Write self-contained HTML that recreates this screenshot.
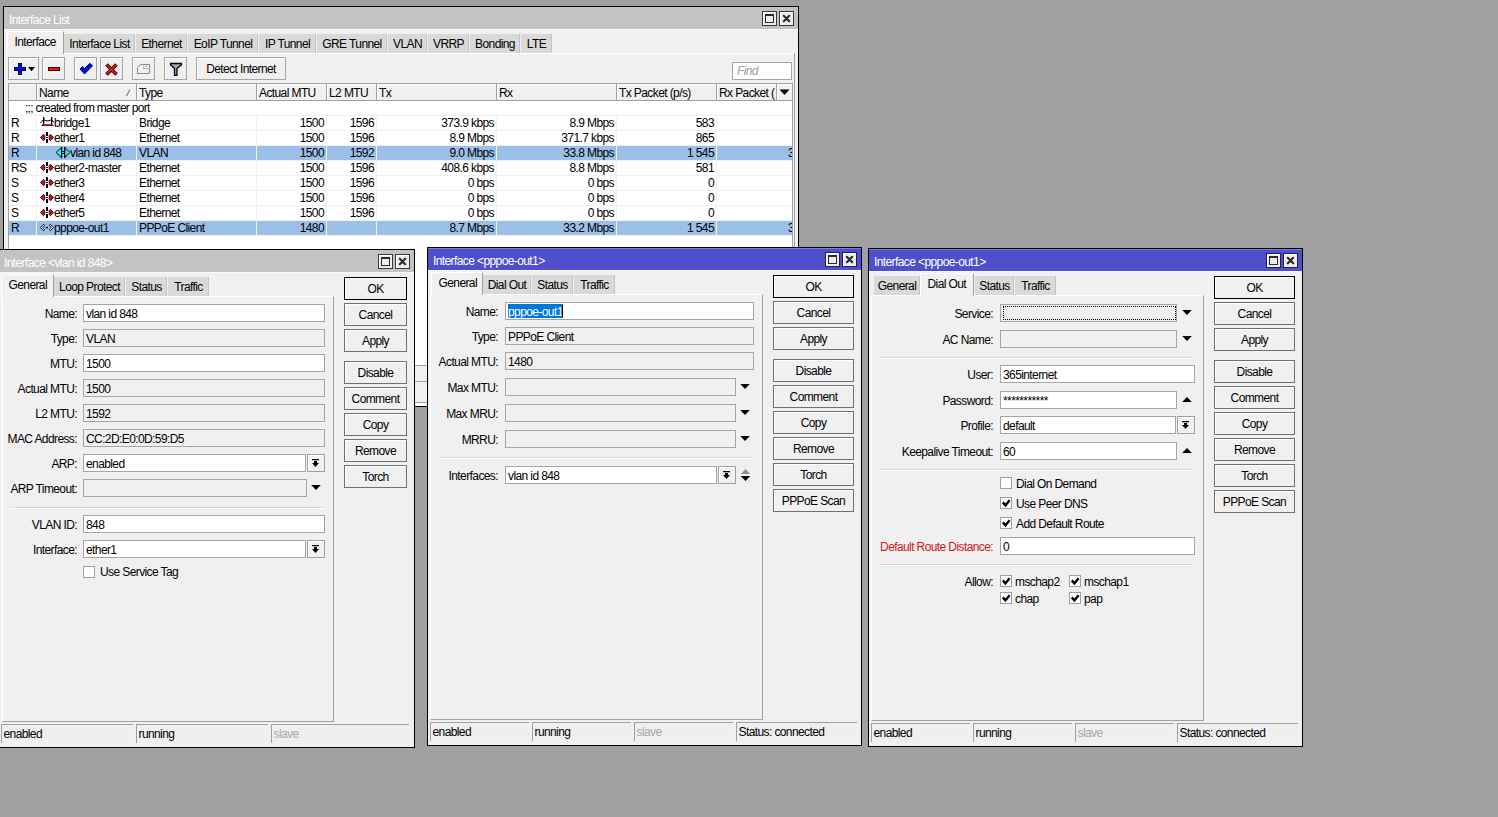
<!DOCTYPE html><html><head><meta charset="utf-8"><style>
html,body{margin:0;padding:0}
body{width:1498px;height:817px;overflow:hidden;background:#a0a0a0;position:relative}
div{position:absolute;box-sizing:border-box}
.t{font-family:"Liberation Sans",sans-serif;font-size:12px;line-height:13px;white-space:pre;letter-spacing:-0.6px;color:#000}
svg{overflow:visible}
</style></head><body>
<div style="left:3px;top:6px;width:796px;height:401px;background:#000"></div>
<div style="left:4px;top:7px;width:794px;height:399px;background:#f0f0f0"></div>
<div style="left:4px;top:7px;width:794px;height:22px;background:#c3c3c3"></div>
<div style="left:4px;top:29px;width:794px;height:1px;background:#fafafa"></div>
<div class="t" style="left:9px;top:14px;color:#fff">Interface List</div>
<div style="left:762px;top:11px;width:15px;height:15px;background:#383838"></div>
<div style="left:763px;top:12px;width:13px;height:13px;background:#fff"></div>
<div style="left:764px;top:13px;width:12px;height:12px;background:#ececec"></div>
<div style="left:765px;top:14px;width:9px;height:9px;border:1px solid #2a2a2a;border-top-width:2px"></div>
<div style="left:779px;top:11px;width:15px;height:15px;background:#383838"></div>
<div style="left:780px;top:12px;width:13px;height:13px;background:#fff"></div>
<div style="left:781px;top:13px;width:12px;height:12px;background:#ececec"></div>
<svg style="position:absolute;left:779px;top:11px" width="15" height="15" viewBox="779 11 15 15"><path d="M783.8 15.8L789.2 21.2M789.2 15.8L783.8 21.2" stroke="#2a2a2a" stroke-width="2.2" stroke-linecap="round"/></svg>
<div style="left:7px;top:31px;width:57px;height:23px;background:#f0f0f0;border-left:1px solid #fff;border-top:1px solid #fff;border-right:1px solid #a0a0a0"></div>
<div class="t" style="left:14.5px;top:36px;">Interface</div>
<div style="left:64px;top:34px;width:71px;height:19px;background:#d9d9d9;border-right:1px solid #c4c4c4"></div>
<div class="t" style="left:-100.5px;top:38px;width:400px;text-align:center;">Interface List</div>
<div style="left:136px;top:34px;width:51px;height:19px;background:#d9d9d9;border-right:1px solid #c4c4c4"></div>
<div class="t" style="left:-38.5px;top:38px;width:400px;text-align:center;">Ethernet</div>
<div style="left:188px;top:34px;width:70px;height:19px;background:#d9d9d9;border-right:1px solid #c4c4c4"></div>
<div class="t" style="left:23.0px;top:38px;width:400px;text-align:center;">EoIP Tunnel</div>
<div style="left:259px;top:34px;width:57px;height:19px;background:#d9d9d9;border-right:1px solid #c4c4c4"></div>
<div class="t" style="left:87.5px;top:38px;width:400px;text-align:center;">IP Tunnel</div>
<div style="left:317px;top:34px;width:70px;height:19px;background:#d9d9d9;border-right:1px solid #c4c4c4"></div>
<div class="t" style="left:152.0px;top:38px;width:400px;text-align:center;">GRE Tunnel</div>
<div style="left:388px;top:34px;width:39px;height:19px;background:#d9d9d9;border-right:1px solid #c4c4c4"></div>
<div class="t" style="left:207.5px;top:38px;width:400px;text-align:center;">VLAN</div>
<div style="left:428px;top:34px;width:41px;height:19px;background:#d9d9d9;border-right:1px solid #c4c4c4"></div>
<div class="t" style="left:248.5px;top:38px;width:400px;text-align:center;">VRRP</div>
<div style="left:470px;top:34px;width:50px;height:19px;background:#d9d9d9;border-right:1px solid #c4c4c4"></div>
<div class="t" style="left:295.0px;top:38px;width:400px;text-align:center;">Bonding</div>
<div style="left:521px;top:34px;width:31px;height:19px;background:#d9d9d9;border-right:1px solid #c4c4c4"></div>
<div class="t" style="left:336.5px;top:38px;width:400px;text-align:center;">LTE</div>
<div style="left:64px;top:53px;width:731px;height:1px;background:#fff"></div>
<div style="left:794px;top:53px;width:1px;height:347px;background:#a0a0a0"></div>
<div style="left:8px;top:57px;width:31px;height:23px;background:#f0f0f0;border:1px solid #a5a5a5"></div>
<div style="left:9px;top:58px;width:29px;height:21px;border-top:1px solid #fff;border-left:1px solid #fff"></div>
<div style="left:42px;top:57px;width:23px;height:23px;background:#f0f0f0;border:1px solid #a5a5a5"></div>
<div style="left:43px;top:58px;width:21px;height:21px;border-top:1px solid #fff;border-left:1px solid #fff"></div>
<div style="left:74px;top:57px;width:23px;height:23px;background:#f0f0f0;border:1px solid #a5a5a5"></div>
<div style="left:75px;top:58px;width:21px;height:21px;border-top:1px solid #fff;border-left:1px solid #fff"></div>
<div style="left:100px;top:57px;width:23px;height:23px;background:#f0f0f0;border:1px solid #a5a5a5"></div>
<div style="left:101px;top:58px;width:21px;height:21px;border-top:1px solid #fff;border-left:1px solid #fff"></div>
<div style="left:132px;top:57px;width:23px;height:23px;background:#f0f0f0;border:1px solid #a5a5a5"></div>
<div style="left:133px;top:58px;width:21px;height:21px;border-top:1px solid #fff;border-left:1px solid #fff"></div>
<div style="left:164px;top:57px;width:23px;height:23px;background:#f0f0f0;border:1px solid #a5a5a5"></div>
<div style="left:165px;top:58px;width:21px;height:21px;border-top:1px solid #fff;border-left:1px solid #fff"></div>
<div style="left:196px;top:57px;width:90px;height:23px;background:#f0f0f0;border:1px solid #a5a5a5"></div>
<div style="left:197px;top:58px;width:88px;height:21px;border-top:1px solid #fff;border-left:1px solid #fff"></div>
<div class="t" style="left:41px;top:63px;width:400px;text-align:center;">Detect Internet</div>
<svg style="position:absolute;left:13px;top:62px" width="24" height="14" viewBox="13 62 24 14"><path d="M18 63H22V67H26V71H22V75H18V71H14V67H18Z" fill="#000050"/><path d="M19 64H21V68H25V70H21V74H19V70H15V68H19Z" fill="#0010f0"/><path d="M28 67H35L31.5 71.3Z" fill="#000"/></svg>
<div style="left:48px;top:67px;width:12px;height:4px;background:#400000"></div>
<div style="left:49px;top:68px;width:10px;height:2px;background:#e81818"></div>
<svg style="position:absolute;left:78px;top:62px" width="16" height="14" viewBox="78 62 16 14"><path d="M80 69L82.5 66.5L84.5 68.5L90 63.3L92.5 65.8L84.5 74Z" fill="#0008e0" stroke="#000050" stroke-width="0.9" stroke-linejoin="round"/></svg>
<svg style="position:absolute;left:104px;top:62px" width="14" height="14" viewBox="104 62 14 14"><path d="M106.5 64.5L116.5 74.5M116.5 64.5L106.5 74.5" stroke="#300000" stroke-width="3.6"/><path d="M106.9 64.9L116.1 74.1M116.1 64.9L106.9 74.1" stroke="#e81818" stroke-width="1.8"/></svg>
<svg style="position:absolute;left:135px;top:62px" width="16" height="14" viewBox="135 62 16 14"><path d="M137.5 67.5L140.5 64.5H149.5V73.5H137.5Z" fill="none" stroke="#8a8a8a" stroke-width="1"/><path d="M143 66.5H144M145.5 66.5H147M143 68.5H145M146 68.5H148" stroke="#9a9a9a" stroke-width="1"/></svg>
<svg style="position:absolute;left:168px;top:62px" width="16" height="15" viewBox="168 62 16 15"><path d="M170.5 63.5H181.5V64.8L177 68.5V75.3H174.5V68.5L170.5 64.8Z" fill="#9aa6c6" stroke="#000" stroke-width="1.3" stroke-linejoin="round"/></svg>
<div style="left:732px;top:62px;width:60px;height:18px;background:#fff;border:1px solid #a5a5a5"></div>
<div class="t" style="left:737px;top:65px;color:#a0a0a0;font-style:italic">Find</div>
<div style="left:8px;top:83px;width:785px;height:283px;background:#fff;border:1px solid #a0a0a0"></div>
<div style="left:9px;top:84px;width:783px;height:17px;background:#f0f0f0;border-bottom:1px solid #a0a0a0;border-top:1px solid #fff"></div>
<div style="left:36px;top:84px;width:1px;height:16px;background:#a0a0a0"></div>
<div style="left:37px;top:85px;width:1px;height:15px;background:#fff"></div>
<div style="left:136px;top:84px;width:1px;height:16px;background:#a0a0a0"></div>
<div style="left:137px;top:85px;width:1px;height:15px;background:#fff"></div>
<div style="left:256px;top:84px;width:1px;height:16px;background:#a0a0a0"></div>
<div style="left:257px;top:85px;width:1px;height:15px;background:#fff"></div>
<div style="left:326px;top:84px;width:1px;height:16px;background:#a0a0a0"></div>
<div style="left:327px;top:85px;width:1px;height:15px;background:#fff"></div>
<div style="left:376px;top:84px;width:1px;height:16px;background:#a0a0a0"></div>
<div style="left:377px;top:85px;width:1px;height:15px;background:#fff"></div>
<div style="left:496px;top:84px;width:1px;height:16px;background:#a0a0a0"></div>
<div style="left:497px;top:85px;width:1px;height:15px;background:#fff"></div>
<div style="left:616px;top:84px;width:1px;height:16px;background:#a0a0a0"></div>
<div style="left:617px;top:85px;width:1px;height:15px;background:#fff"></div>
<div style="left:716px;top:84px;width:1px;height:16px;background:#a0a0a0"></div>
<div style="left:717px;top:85px;width:1px;height:15px;background:#fff"></div>
<div style="left:776px;top:84px;width:1px;height:16px;background:#a0a0a0"></div>
<div style="left:777px;top:85px;width:1px;height:15px;background:#fff"></div>
<div class="t" style="left:39px;top:87px;">Name</div>
<div class="t" style="left:139px;top:87px;">Type</div>
<div class="t" style="left:259px;top:87px;">Actual MTU</div>
<div class="t" style="left:329px;top:87px;">L2 MTU</div>
<div class="t" style="left:379px;top:87px;">Tx</div>
<div class="t" style="left:499px;top:87px;">Rx</div>
<div class="t" style="left:619px;top:87px;">Tx Packet (p/s)</div>
<div class="t" style="left:719px;top:87px;width:56px;overflow:hidden">Rx Packet (p/s)</div>
<svg style="position:absolute;left:778px;top:88px" width="13" height="9" viewBox="778 88 13 9"><path d="M779.5 89.5H789.5L784.5 95Z" fill="#000"/></svg>
<svg style="position:absolute;left:125px;top:88px" width="10" height="10" viewBox="125 88 10 10"><path d="M133.5 96H126.5M130 89.5L133.5 96" stroke="#fff" stroke-width="1.1" fill="none"/><path d="M126.5 96L130 89.5" stroke="#7a7a7a" stroke-width="1.1" fill="none"/></svg>
<div class="t" style="left:25px;top:102px;letter-spacing:-0.72px">;;; created from master port</div>
<div style="left:9px;top:115px;width:783px;height:1px;background:#f0f0f0"></div>
<div class="t" style="left:11px;top:117px;">R</div>
<svg style="position:absolute;left:39px;top:115px" width="16" height="15" viewBox="39 115 16 15"><path d="M43 117H44.3V124.5H43Z M51 117H52.3V124.5H51Z" fill="#000"/><path d="M40.3 123L43.6 119.6L46 120.8H49L51.6 119.6L54 122.5" stroke="#000" stroke-width="1" fill="none"/><path d="M41 126L42.5 124.2H52.5L54 126Z" fill="#900010"/></svg>
<div class="t" style="left:54px;top:117px;">bridge1</div>
<div class="t" style="left:139px;top:117px;">Bridge</div>
<div class="t" style="left:-76px;top:117px;width:400px;text-align:right;">1500</div>
<div class="t" style="left:-26px;top:117px;width:400px;text-align:right;">1596</div>
<div class="t" style="left:94px;top:117px;width:400px;text-align:right;">373.9 kbps</div>
<div class="t" style="left:214px;top:117px;width:400px;text-align:right;">8.9 Mbps</div>
<div class="t" style="left:314px;top:117px;width:400px;text-align:right;">583</div>
<div style="left:9px;top:130px;width:783px;height:1px;background:#f0f0f0"></div>
<div class="t" style="left:11px;top:132px;">R</div>
<svg style="position:absolute;left:39px;top:130px" width="16" height="15" viewBox="39 130 16 15"><path d="M40.4 137.5L43.6 134.3L44.8 135.5V139.5L43.6 140.7Z M53.6 137.5L50.4 134.3L49.2 135.5V139.5L50.4 140.7Z" fill="#b81828" stroke="#380008" stroke-width="0.9" stroke-linejoin="round"/><path d="M46 132H48V136H46Z M46 137H48V138H46Z M46 139H48V143H46Z" fill="#000"/></svg>
<div class="t" style="left:54px;top:132px;">ether1</div>
<div class="t" style="left:139px;top:132px;">Ethernet</div>
<div class="t" style="left:-76px;top:132px;width:400px;text-align:right;">1500</div>
<div class="t" style="left:-26px;top:132px;width:400px;text-align:right;">1596</div>
<div class="t" style="left:94px;top:132px;width:400px;text-align:right;">8.9 Mbps</div>
<div class="t" style="left:214px;top:132px;width:400px;text-align:right;">371.7 kbps</div>
<div class="t" style="left:314px;top:132px;width:400px;text-align:right;">865</div>
<div style="left:9px;top:146px;width:783px;height:14px;background:#9bbfe8"></div>
<div style="left:9px;top:145px;width:783px;height:1px;background:#f0f0f0"></div>
<div class="t" style="left:11px;top:147px;">R</div>
<svg style="position:absolute;left:55px;top:145px" width="16" height="15" viewBox="55 145 16 15"><path d="M56.2 152.5L61.5 147.2V157.8Z M69.8 152.5L64.7 147.2V157.8Z" fill="#28f0f0" stroke="#000" stroke-width="1" stroke-linejoin="miter"/><path d="M61.5 151.5H64.7V153.5H61.5Z" fill="#28f0f0"/><path d="M61.5 151.5H64.7M61.5 153.5H64.7" stroke="#000" stroke-width="0.9"/><path d="M61 147H62.2V158H61Z M64 147H65.2V158H64Z" fill="#000"/></svg>
<div class="t" style="left:70px;top:147px;">vlan id 848</div>
<div class="t" style="left:139px;top:147px;">VLAN</div>
<div class="t" style="left:-76px;top:147px;width:400px;text-align:right;">1500</div>
<div class="t" style="left:-26px;top:147px;width:400px;text-align:right;">1592</div>
<div class="t" style="left:94px;top:147px;width:400px;text-align:right;">9.0 Mbps</div>
<div class="t" style="left:214px;top:147px;width:400px;text-align:right;">33.8 Mbps</div>
<div class="t" style="left:314px;top:147px;width:400px;text-align:right;">1 545</div>
<div style="left:717px;top:147px;width:75px;height:13px;overflow:hidden"><div class="t" style="left:0;top:0px;width:77px;text-align:right">3</div></div>
<div style="left:9px;top:160px;width:783px;height:1px;background:#f0f0f0"></div>
<div class="t" style="left:11px;top:162px;">RS</div>
<svg style="position:absolute;left:39px;top:160px" width="16" height="15" viewBox="39 160 16 15"><path d="M40.4 167.5L43.6 164.3L44.8 165.5V169.5L43.6 170.7Z M53.6 167.5L50.4 164.3L49.2 165.5V169.5L50.4 170.7Z" fill="#b81828" stroke="#380008" stroke-width="0.9" stroke-linejoin="round"/><path d="M46 162H48V166H46Z M46 167H48V168H46Z M46 169H48V173H46Z" fill="#000"/></svg>
<div class="t" style="left:54px;top:162px;">ether2-master</div>
<div class="t" style="left:139px;top:162px;">Ethernet</div>
<div class="t" style="left:-76px;top:162px;width:400px;text-align:right;">1500</div>
<div class="t" style="left:-26px;top:162px;width:400px;text-align:right;">1596</div>
<div class="t" style="left:94px;top:162px;width:400px;text-align:right;">408.6 kbps</div>
<div class="t" style="left:214px;top:162px;width:400px;text-align:right;">8.8 Mbps</div>
<div class="t" style="left:314px;top:162px;width:400px;text-align:right;">581</div>
<div style="left:9px;top:175px;width:783px;height:1px;background:#f0f0f0"></div>
<div class="t" style="left:11px;top:177px;">S</div>
<svg style="position:absolute;left:39px;top:175px" width="16" height="15" viewBox="39 175 16 15"><path d="M40.4 182.5L43.6 179.3L44.8 180.5V184.5L43.6 185.7Z M53.6 182.5L50.4 179.3L49.2 180.5V184.5L50.4 185.7Z" fill="#b81828" stroke="#380008" stroke-width="0.9" stroke-linejoin="round"/><path d="M46 177H48V181H46Z M46 182H48V183H46Z M46 184H48V188H46Z" fill="#000"/></svg>
<div class="t" style="left:54px;top:177px;">ether3</div>
<div class="t" style="left:139px;top:177px;">Ethernet</div>
<div class="t" style="left:-76px;top:177px;width:400px;text-align:right;">1500</div>
<div class="t" style="left:-26px;top:177px;width:400px;text-align:right;">1596</div>
<div class="t" style="left:94px;top:177px;width:400px;text-align:right;">0 bps</div>
<div class="t" style="left:214px;top:177px;width:400px;text-align:right;">0 bps</div>
<div class="t" style="left:314px;top:177px;width:400px;text-align:right;">0</div>
<div style="left:9px;top:190px;width:783px;height:1px;background:#f0f0f0"></div>
<div class="t" style="left:11px;top:192px;">S</div>
<svg style="position:absolute;left:39px;top:190px" width="16" height="15" viewBox="39 190 16 15"><path d="M40.4 197.5L43.6 194.3L44.8 195.5V199.5L43.6 200.7Z M53.6 197.5L50.4 194.3L49.2 195.5V199.5L50.4 200.7Z" fill="#b81828" stroke="#380008" stroke-width="0.9" stroke-linejoin="round"/><path d="M46 192H48V196H46Z M46 197H48V198H46Z M46 199H48V203H46Z" fill="#000"/></svg>
<div class="t" style="left:54px;top:192px;">ether4</div>
<div class="t" style="left:139px;top:192px;">Ethernet</div>
<div class="t" style="left:-76px;top:192px;width:400px;text-align:right;">1500</div>
<div class="t" style="left:-26px;top:192px;width:400px;text-align:right;">1596</div>
<div class="t" style="left:94px;top:192px;width:400px;text-align:right;">0 bps</div>
<div class="t" style="left:214px;top:192px;width:400px;text-align:right;">0 bps</div>
<div class="t" style="left:314px;top:192px;width:400px;text-align:right;">0</div>
<div style="left:9px;top:205px;width:783px;height:1px;background:#f0f0f0"></div>
<div class="t" style="left:11px;top:207px;">S</div>
<svg style="position:absolute;left:39px;top:205px" width="16" height="15" viewBox="39 205 16 15"><path d="M40.4 212.5L43.6 209.3L44.8 210.5V214.5L43.6 215.7Z M53.6 212.5L50.4 209.3L49.2 210.5V214.5L50.4 215.7Z" fill="#b81828" stroke="#380008" stroke-width="0.9" stroke-linejoin="round"/><path d="M46 207H48V211H46Z M46 212H48V213H46Z M46 214H48V218H46Z" fill="#000"/></svg>
<div class="t" style="left:54px;top:207px;">ether5</div>
<div class="t" style="left:139px;top:207px;">Ethernet</div>
<div class="t" style="left:-76px;top:207px;width:400px;text-align:right;">1500</div>
<div class="t" style="left:-26px;top:207px;width:400px;text-align:right;">1596</div>
<div class="t" style="left:94px;top:207px;width:400px;text-align:right;">0 bps</div>
<div class="t" style="left:214px;top:207px;width:400px;text-align:right;">0 bps</div>
<div class="t" style="left:314px;top:207px;width:400px;text-align:right;">0</div>
<div style="left:9px;top:221px;width:783px;height:14px;background:#9bbfe8"></div>
<div style="left:9px;top:220px;width:783px;height:1px;background:#f0f0f0"></div>
<div class="t" style="left:11px;top:222px;">R</div>
<svg style="position:absolute;left:39px;top:220px" width="16" height="15" viewBox="39 220 16 15"><path d="M40.3 227.5L43.6 224.2L44.6 225.6L42.7 227.5L44.6 229.4L43.6 230.8Z M53.7 227.5L50.4 224.2L49.4 225.6L51.3 227.5L49.4 229.4L50.4 230.8Z" fill="#e8e0f4" stroke="#000" stroke-width="0.9" stroke-linejoin="round"/><path d="M45.8 226.9H48V228.2H45.8Z" fill="#000"/></svg>
<div class="t" style="left:54px;top:222px;">pppoe-out1</div>
<div class="t" style="left:139px;top:222px;">PPPoE Client</div>
<div class="t" style="left:-76px;top:222px;width:400px;text-align:right;">1480</div>
<div class="t" style="left:-26px;top:222px;width:400px;text-align:right;"></div>
<div class="t" style="left:94px;top:222px;width:400px;text-align:right;">8.7 Mbps</div>
<div class="t" style="left:214px;top:222px;width:400px;text-align:right;">33.2 Mbps</div>
<div class="t" style="left:314px;top:222px;width:400px;text-align:right;">1 545</div>
<div style="left:717px;top:222px;width:75px;height:13px;overflow:hidden"><div class="t" style="left:0;top:0px;width:77px;text-align:right">3</div></div>
<div style="left:36px;top:115px;width:1px;height:120px;background:#f0f0f0"></div>
<div style="left:136px;top:115px;width:1px;height:120px;background:#f0f0f0"></div>
<div style="left:256px;top:115px;width:1px;height:120px;background:#f0f0f0"></div>
<div style="left:326px;top:115px;width:1px;height:120px;background:#f0f0f0"></div>
<div style="left:376px;top:115px;width:1px;height:120px;background:#f0f0f0"></div>
<div style="left:496px;top:115px;width:1px;height:120px;background:#f0f0f0"></div>
<div style="left:616px;top:115px;width:1px;height:120px;background:#f0f0f0"></div>
<div style="left:716px;top:115px;width:1px;height:120px;background:#f0f0f0"></div>
<div style="left:9px;top:235px;width:783px;height:1px;background:#f0f0f0"></div>
<div style="left:4px;top:366px;width:794px;height:16px;background:#f0f0f0;border-bottom:1px solid #a0a0a0"></div>
<div style="left:4px;top:382px;width:794px;height:21px;background:#f0f0f0;border-bottom:1px solid #a0a0a0"></div>
<div style="left:4px;top:403px;width:794px;height:3px;background:#fff"></div>
<div style="left:-2px;top:249px;width:417px;height:499px;background:#000"></div>
<div style="left:-1px;top:250px;width:415px;height:497px;background:#f0f0f0"></div>
<div style="left:-1px;top:250px;width:415px;height:22px;background:#c3c3c3"></div>
<div style="left:-1px;top:272px;width:415px;height:1px;background:#fafafa"></div>
<div class="t" style="left:4px;top:257px;color:#fff">Interface &lt;vlan id 848&gt;</div>
<div style="left:378px;top:254px;width:15px;height:15px;background:#383838"></div>
<div style="left:379px;top:255px;width:13px;height:13px;background:#fff"></div>
<div style="left:380px;top:256px;width:12px;height:12px;background:#ececec"></div>
<div style="left:381px;top:257px;width:9px;height:9px;border:1px solid #2a2a2a;border-top-width:2px"></div>
<div style="left:395px;top:254px;width:15px;height:15px;background:#383838"></div>
<div style="left:396px;top:255px;width:13px;height:13px;background:#fff"></div>
<div style="left:397px;top:256px;width:12px;height:12px;background:#ececec"></div>
<svg style="position:absolute;left:395px;top:254px" width="15" height="15" viewBox="395 254 15 15"><path d="M399.8 258.8L405.2 264.2M405.2 258.8L399.8 264.2" stroke="#2a2a2a" stroke-width="2.2" stroke-linecap="round"/></svg>
<div style="left:2px;top:296px;width:332px;height:426px;border-top:1px solid #fff;border-right:1px solid #a0a0a0;border-bottom:1px solid #a0a0a0;border-left:1px solid #fff"></div>
<div style="left:1px;top:274px;width:53px;height:23px;background:#f0f0f0;border-left:1px solid #fff;border-top:1px solid #fff;border-right:1px solid #a0a0a0"></div>
<div class="t" style="left:8.5px;top:279px;">General</div>
<div style="left:54px;top:277px;width:71px;height:19px;background:#d9d9d9;border-right:1px solid #c4c4c4"></div>
<div class="t" style="left:-110.5px;top:281px;width:400px;text-align:center;">Loop Protect</div>
<div style="left:126px;top:277px;width:41px;height:19px;background:#d9d9d9;border-right:1px solid #c4c4c4"></div>
<div class="t" style="left:-53.5px;top:281px;width:400px;text-align:center;">Status</div>
<div style="left:168px;top:277px;width:41px;height:19px;background:#d9d9d9;border-right:1px solid #c4c4c4"></div>
<div class="t" style="left:-11.5px;top:281px;width:400px;text-align:center;">Traffic</div>
<div style="left:344px;top:277px;width:63px;height:23px;background:#f0f0f0;border:1px solid #000"></div>
<div style="left:345px;top:278px;width:61px;height:21px;border:1px solid #fff;border-right:0;border-bottom:0"></div>
<div class="t" style="left:175.5px;top:283px;width:400px;text-align:center;">OK</div>
<div style="left:344px;top:303px;width:63px;height:23px;background:#f0f0f0;border:1px solid #707070"></div>
<div style="left:345px;top:304px;width:61px;height:21px;border:1px solid #fff;border-right:0;border-bottom:0"></div>
<div class="t" style="left:175.5px;top:309px;width:400px;text-align:center;">Cancel</div>
<div style="left:344px;top:329px;width:63px;height:23px;background:#f0f0f0;border:1px solid #707070"></div>
<div style="left:345px;top:330px;width:61px;height:21px;border:1px solid #fff;border-right:0;border-bottom:0"></div>
<div class="t" style="left:175.5px;top:335px;width:400px;text-align:center;">Apply</div>
<div style="left:344px;top:361px;width:63px;height:23px;background:#f0f0f0;border:1px solid #707070"></div>
<div style="left:345px;top:362px;width:61px;height:21px;border:1px solid #fff;border-right:0;border-bottom:0"></div>
<div class="t" style="left:175.5px;top:367px;width:400px;text-align:center;">Disable</div>
<div style="left:344px;top:387px;width:63px;height:23px;background:#f0f0f0;border:1px solid #707070"></div>
<div style="left:345px;top:388px;width:61px;height:21px;border:1px solid #fff;border-right:0;border-bottom:0"></div>
<div class="t" style="left:175.5px;top:393px;width:400px;text-align:center;">Comment</div>
<div style="left:344px;top:413px;width:63px;height:23px;background:#f0f0f0;border:1px solid #707070"></div>
<div style="left:345px;top:414px;width:61px;height:21px;border:1px solid #fff;border-right:0;border-bottom:0"></div>
<div class="t" style="left:175.5px;top:419px;width:400px;text-align:center;">Copy</div>
<div style="left:344px;top:439px;width:63px;height:23px;background:#f0f0f0;border:1px solid #707070"></div>
<div style="left:345px;top:440px;width:61px;height:21px;border:1px solid #fff;border-right:0;border-bottom:0"></div>
<div class="t" style="left:175.5px;top:445px;width:400px;text-align:center;">Remove</div>
<div style="left:344px;top:465px;width:63px;height:23px;background:#f0f0f0;border:1px solid #707070"></div>
<div style="left:345px;top:466px;width:61px;height:21px;border:1px solid #fff;border-right:0;border-bottom:0"></div>
<div class="t" style="left:175.5px;top:471px;width:400px;text-align:center;">Torch</div>
<div style="left:1px;top:724px;width:132px;height:19px;border-left:1px solid #a0a0a0;border-top:1px solid #a0a0a0;background:#efefef"></div>
<div class="t" style="left:3.5px;top:728px;color:#000">enabled</div>
<div style="left:136px;top:724px;width:132px;height:19px;border-left:1px solid #a0a0a0;border-top:1px solid #a0a0a0;background:#efefef"></div>
<div class="t" style="left:138.5px;top:728px;color:#000">running</div>
<div style="left:271px;top:724px;width:138px;height:19px;border-left:1px solid #a0a0a0;border-top:1px solid #a0a0a0;background:#efefef"></div>
<div class="t" style="left:273.5px;top:728px;color:#a8a8a8">slave</div>
<div class="t" style="left:-323px;top:308px;width:400px;text-align:right;color:#000">Name:</div>
<div style="left:83px;top:304px;width:242px;height:18px;background:#fff;border:1px solid #a5a5a5"></div>
<div class="t" style="left:86px;top:308px;">vlan id 848</div>
<div class="t" style="left:-323px;top:333px;width:400px;text-align:right;color:#000">Type:</div>
<div style="left:83px;top:329px;width:242px;height:18px;background:#f0f0f0;border:1px solid #a5a5a5"></div>
<div class="t" style="left:86px;top:333px;">VLAN</div>
<div class="t" style="left:-323px;top:358px;width:400px;text-align:right;color:#000">MTU:</div>
<div style="left:83px;top:354px;width:242px;height:18px;background:#fff;border:1px solid #a5a5a5"></div>
<div class="t" style="left:86px;top:358px;">1500</div>
<div class="t" style="left:-323px;top:383px;width:400px;text-align:right;color:#000">Actual MTU:</div>
<div style="left:83px;top:379px;width:242px;height:18px;background:#f0f0f0;border:1px solid #a5a5a5"></div>
<div class="t" style="left:86px;top:383px;">1500</div>
<div class="t" style="left:-323px;top:408px;width:400px;text-align:right;color:#000">L2 MTU:</div>
<div style="left:83px;top:404px;width:242px;height:18px;background:#f0f0f0;border:1px solid #a5a5a5"></div>
<div class="t" style="left:86px;top:408px;">1592</div>
<div class="t" style="left:-323px;top:433px;width:400px;text-align:right;color:#000">MAC Address:</div>
<div style="left:83px;top:429px;width:242px;height:18px;background:#f0f0f0;border:1px solid #a5a5a5"></div>
<div class="t" style="left:86px;top:433px;">CC:2D:E0:0D:59:D5</div>
<div class="t" style="left:-323px;top:458px;width:400px;text-align:right;color:#000">ARP:</div>
<div style="left:83px;top:454px;width:223px;height:18px;background:#fff;border:1px solid #a5a5a5"></div>
<div class="t" style="left:86px;top:458px;">enabled</div>
<div style="left:307px;top:454px;width:18px;height:18px;background:#f0f0f0;border:1px solid #a0a0a0"></div>
<div style="left:308px;top:455px;width:16px;height:16px;border-top:1px solid #fff;border-left:1px solid #fff"></div>
<svg style="position:absolute;left:307px;top:454px" width="18" height="18" viewBox="307 454 18 18"><path d="M312 459H319V460.2H312Z M314 461H317V463H319L315.5 467L312 463H314Z" fill="#000"/></svg>
<div class="t" style="left:-323px;top:483px;width:400px;text-align:right;color:#000">ARP Timeout:</div>
<div style="left:83px;top:479px;width:224px;height:18px;background:#f0f0f0;border:1px solid #a5a5a5"></div>
<div class="t" style="left:86px;top:483px;"></div>
<svg style="position:absolute;left:310px;top:484px" width="12" height="8" viewBox="310 484 12 8"><path d="M311.2 485H320.8L316 490Z" fill="#000"/></svg>
<div class="t" style="left:-323px;top:519px;width:400px;text-align:right;color:#000">VLAN ID:</div>
<div style="left:83px;top:515px;width:242px;height:18px;background:#fff;border:1px solid #a5a5a5"></div>
<div class="t" style="left:86px;top:519px;">848</div>
<div class="t" style="left:-323px;top:544px;width:400px;text-align:right;color:#000">Interface:</div>
<div style="left:83px;top:540px;width:223px;height:18px;background:#fff;border:1px solid #a5a5a5"></div>
<div class="t" style="left:86px;top:544px;">ether1</div>
<div style="left:307px;top:540px;width:18px;height:18px;background:#f0f0f0;border:1px solid #a0a0a0"></div>
<div style="left:308px;top:541px;width:16px;height:16px;border-top:1px solid #fff;border-left:1px solid #fff"></div>
<svg style="position:absolute;left:307px;top:540px" width="18" height="18" viewBox="307 540 18 18"><path d="M312 545H319V546.2H312Z M314 547H317V549H319L315.5 553L312 549H314Z" fill="#000"/></svg>
<div style="left:10px;top:507px;width:315px;height:1px;background:#d8d8d8"></div>
<div style="left:10px;top:508px;width:315px;height:1px;background:#fff"></div>
<div style="left:83px;top:566px;width:12px;height:12px;background:#fff;border:1px solid #a0a0a0"></div>
<div class="t" style="left:100px;top:566px;">Use Service Tag</div>
<div style="left:427px;top:247px;width:435px;height:499px;background:#000"></div>
<div style="left:428px;top:248px;width:433px;height:497px;background:#f0f0f0"></div>
<div style="left:428px;top:248px;width:433px;height:22px;background:#4f4fcb"></div>
<div style="left:428px;top:248px;width:433px;height:1px;background:#7a7ae0"></div>
<div style="left:428px;top:270px;width:433px;height:1px;background:#fafafa"></div>
<div class="t" style="left:433px;top:255px;color:#fff">Interface &lt;pppoe-out1&gt;</div>
<div style="left:825px;top:252px;width:15px;height:15px;background:#1e1e5a"></div>
<div style="left:826px;top:253px;width:13px;height:13px;background:#fff"></div>
<div style="left:827px;top:254px;width:12px;height:12px;background:#ececec"></div>
<div style="left:828px;top:255px;width:9px;height:9px;border:1px solid #2a2a2a;border-top-width:2px"></div>
<div style="left:842px;top:252px;width:15px;height:15px;background:#1e1e5a"></div>
<div style="left:843px;top:253px;width:13px;height:13px;background:#fff"></div>
<div style="left:844px;top:254px;width:12px;height:12px;background:#ececec"></div>
<svg style="position:absolute;left:842px;top:252px" width="15" height="15" viewBox="842 252 15 15"><path d="M846.8 256.8L852.2 262.2M852.2 256.8L846.8 262.2" stroke="#2a2a2a" stroke-width="2.2" stroke-linecap="round"/></svg>
<div style="left:430px;top:294px;width:333px;height:426px;border-top:1px solid #fff;border-right:1px solid #a0a0a0;border-bottom:1px solid #a0a0a0;border-left:1px solid #fff"></div>
<div style="left:431px;top:272px;width:52px;height:23px;background:#f0f0f0;border-left:1px solid #fff;border-top:1px solid #fff;border-right:1px solid #a0a0a0"></div>
<div class="t" style="left:438.5px;top:277px;">General</div>
<div style="left:483px;top:275px;width:48px;height:19px;background:#d9d9d9;border-right:1px solid #c4c4c4"></div>
<div class="t" style="left:307.0px;top:279px;width:400px;text-align:center;">Dial Out</div>
<div style="left:532px;top:275px;width:41px;height:19px;background:#d9d9d9;border-right:1px solid #c4c4c4"></div>
<div class="t" style="left:352.5px;top:279px;width:400px;text-align:center;">Status</div>
<div style="left:574px;top:275px;width:41px;height:19px;background:#d9d9d9;border-right:1px solid #c4c4c4"></div>
<div class="t" style="left:394.5px;top:279px;width:400px;text-align:center;">Traffic</div>
<div style="left:773px;top:275px;width:81px;height:23px;background:#f0f0f0;border:1px solid #000"></div>
<div style="left:774px;top:276px;width:79px;height:21px;border:1px solid #fff;border-right:0;border-bottom:0"></div>
<div class="t" style="left:613.5px;top:281px;width:400px;text-align:center;">OK</div>
<div style="left:773px;top:301px;width:81px;height:23px;background:#f0f0f0;border:1px solid #707070"></div>
<div style="left:774px;top:302px;width:79px;height:21px;border:1px solid #fff;border-right:0;border-bottom:0"></div>
<div class="t" style="left:613.5px;top:307px;width:400px;text-align:center;">Cancel</div>
<div style="left:773px;top:327px;width:81px;height:23px;background:#f0f0f0;border:1px solid #707070"></div>
<div style="left:774px;top:328px;width:79px;height:21px;border:1px solid #fff;border-right:0;border-bottom:0"></div>
<div class="t" style="left:613.5px;top:333px;width:400px;text-align:center;">Apply</div>
<div style="left:773px;top:359px;width:81px;height:23px;background:#f0f0f0;border:1px solid #707070"></div>
<div style="left:774px;top:360px;width:79px;height:21px;border:1px solid #fff;border-right:0;border-bottom:0"></div>
<div class="t" style="left:613.5px;top:365px;width:400px;text-align:center;">Disable</div>
<div style="left:773px;top:385px;width:81px;height:23px;background:#f0f0f0;border:1px solid #707070"></div>
<div style="left:774px;top:386px;width:79px;height:21px;border:1px solid #fff;border-right:0;border-bottom:0"></div>
<div class="t" style="left:613.5px;top:391px;width:400px;text-align:center;">Comment</div>
<div style="left:773px;top:411px;width:81px;height:23px;background:#f0f0f0;border:1px solid #707070"></div>
<div style="left:774px;top:412px;width:79px;height:21px;border:1px solid #fff;border-right:0;border-bottom:0"></div>
<div class="t" style="left:613.5px;top:417px;width:400px;text-align:center;">Copy</div>
<div style="left:773px;top:437px;width:81px;height:23px;background:#f0f0f0;border:1px solid #707070"></div>
<div style="left:774px;top:438px;width:79px;height:21px;border:1px solid #fff;border-right:0;border-bottom:0"></div>
<div class="t" style="left:613.5px;top:443px;width:400px;text-align:center;">Remove</div>
<div style="left:773px;top:463px;width:81px;height:23px;background:#f0f0f0;border:1px solid #707070"></div>
<div style="left:774px;top:464px;width:79px;height:21px;border:1px solid #fff;border-right:0;border-bottom:0"></div>
<div class="t" style="left:613.5px;top:469px;width:400px;text-align:center;">Torch</div>
<div style="left:773px;top:489px;width:81px;height:23px;background:#f0f0f0;border:1px solid #707070"></div>
<div style="left:774px;top:490px;width:79px;height:21px;border:1px solid #fff;border-right:0;border-bottom:0"></div>
<div class="t" style="left:613.5px;top:495px;width:400px;text-align:center;">PPPoE Scan</div>
<div style="left:430px;top:722px;width:99px;height:19px;border-left:1px solid #a0a0a0;border-top:1px solid #a0a0a0;background:#efefef"></div>
<div class="t" style="left:432.5px;top:726px;color:#000">enabled</div>
<div style="left:532px;top:722px;width:99px;height:19px;border-left:1px solid #a0a0a0;border-top:1px solid #a0a0a0;background:#efefef"></div>
<div class="t" style="left:534.5px;top:726px;color:#000">running</div>
<div style="left:634px;top:722px;width:99px;height:19px;border-left:1px solid #a0a0a0;border-top:1px solid #a0a0a0;background:#efefef"></div>
<div class="t" style="left:636.5px;top:726px;color:#a8a8a8">slave</div>
<div style="left:736px;top:722px;width:121px;height:19px;border-left:1px solid #a0a0a0;border-top:1px solid #a0a0a0;background:#efefef"></div>
<div class="t" style="left:738.5px;top:726px;color:#000">Status: connected</div>
<div class="t" style="left:98px;top:306px;width:400px;text-align:right;">Name:</div>
<div style="left:505px;top:302px;width:249px;height:18px;background:#fff;border:1px solid #a5a5a5"></div>
<div style="left:508px;top:304px;width:55px;height:14px;background:#0078d7"></div>
<div class="t" style="left:508px;top:306px;color:#fff">pppoe-out1</div>
<div style="left:562px;top:305px;width:1px;height:12px;background:#000"></div>
<div class="t" style="left:98px;top:331px;width:400px;text-align:right;">Type:</div>
<div style="left:505px;top:327px;width:249px;height:18px;background:#f0f0f0;border:1px solid #a5a5a5"></div>
<div class="t" style="left:508px;top:331px;">PPPoE Client</div>
<div class="t" style="left:98px;top:356px;width:400px;text-align:right;">Actual MTU:</div>
<div style="left:505px;top:352px;width:249px;height:18px;background:#f0f0f0;border:1px solid #a5a5a5"></div>
<div class="t" style="left:508px;top:356px;">1480</div>
<div class="t" style="left:98px;top:382px;width:400px;text-align:right;">Max MTU:</div>
<div style="left:505px;top:378px;width:231px;height:18px;background:#f0f0f0;border:1px solid #a5a5a5"></div>
<svg style="position:absolute;left:739px;top:383px" width="12" height="8" viewBox="739 383 12 8"><path d="M740.2 384H749.8L745 389Z" fill="#000"/></svg>
<div class="t" style="left:98px;top:408px;width:400px;text-align:right;">Max MRU:</div>
<div style="left:505px;top:404px;width:231px;height:18px;background:#f0f0f0;border:1px solid #a5a5a5"></div>
<svg style="position:absolute;left:739px;top:409px" width="12" height="8" viewBox="739 409 12 8"><path d="M740.2 410H749.8L745 415Z" fill="#000"/></svg>
<div class="t" style="left:98px;top:434px;width:400px;text-align:right;">MRRU:</div>
<div style="left:505px;top:430px;width:231px;height:18px;background:#f0f0f0;border:1px solid #a5a5a5"></div>
<svg style="position:absolute;left:739px;top:435px" width="12" height="8" viewBox="739 435 12 8"><path d="M740.2 436H749.8L745 441Z" fill="#000"/></svg>
<div style="left:439px;top:457px;width:315px;height:1px;background:#d8d8d8"></div>
<div style="left:439px;top:458px;width:315px;height:1px;background:#fff"></div>
<div class="t" style="left:98px;top:470px;width:400px;text-align:right;">Interfaces:</div>
<div style="left:505px;top:466px;width:212px;height:18px;background:#fff;border:1px solid #a5a5a5"></div>
<div class="t" style="left:508px;top:470px;">vlan id 848</div>
<div style="left:718px;top:466px;width:18px;height:18px;background:#f0f0f0;border:1px solid #a0a0a0"></div>
<div style="left:719px;top:467px;width:16px;height:16px;border-top:1px solid #fff;border-left:1px solid #fff"></div>
<svg style="position:absolute;left:718px;top:466px" width="18" height="18" viewBox="718 466 18 18"><path d="M723 471H730V472.2H723Z M725 473H728V475H730L726.5 479L723 475H725Z" fill="#000"/></svg>
<svg style="position:absolute;left:739px;top:468px" width="13" height="15" viewBox="739 468 13 15"><path d="M740.8 474H750.2L745.5 469Z" fill="#8a948a"/><path d="M740.8 476H750.2L745.5 481Z" fill="#000"/></svg>
<div style="left:868px;top:248px;width:435px;height:499px;background:#000"></div>
<div style="left:869px;top:249px;width:433px;height:497px;background:#f0f0f0"></div>
<div style="left:869px;top:249px;width:433px;height:22px;background:#4f4fcb"></div>
<div style="left:869px;top:249px;width:433px;height:1px;background:#7a7ae0"></div>
<div style="left:869px;top:271px;width:433px;height:1px;background:#fafafa"></div>
<div class="t" style="left:874px;top:256px;color:#fff">Interface &lt;pppoe-out1&gt;</div>
<div style="left:1266px;top:253px;width:15px;height:15px;background:#1e1e5a"></div>
<div style="left:1267px;top:254px;width:13px;height:13px;background:#fff"></div>
<div style="left:1268px;top:255px;width:12px;height:12px;background:#ececec"></div>
<div style="left:1269px;top:256px;width:9px;height:9px;border:1px solid #2a2a2a;border-top-width:2px"></div>
<div style="left:1283px;top:253px;width:15px;height:15px;background:#1e1e5a"></div>
<div style="left:1284px;top:254px;width:13px;height:13px;background:#fff"></div>
<div style="left:1285px;top:255px;width:12px;height:12px;background:#ececec"></div>
<svg style="position:absolute;left:1283px;top:253px" width="15" height="15" viewBox="1283 253 15 15"><path d="M1287.8 257.8L1293.2 263.2M1293.2 257.8L1287.8 263.2" stroke="#2a2a2a" stroke-width="2.2" stroke-linecap="round"/></svg>
<div style="left:871px;top:295px;width:333px;height:426px;border-top:1px solid #fff;border-right:1px solid #a0a0a0;border-bottom:1px solid #a0a0a0;border-left:1px solid #fff"></div>
<div style="left:874px;top:276px;width:46px;height:19px;background:#d9d9d9;border-right:1px solid #c4c4c4"></div>
<div class="t" style="left:697.0px;top:280px;width:400px;text-align:center;">General</div>
<div style="left:920px;top:273px;width:54px;height:23px;background:#f0f0f0;border-left:1px solid #fff;border-top:1px solid #fff;border-right:1px solid #a0a0a0"></div>
<div class="t" style="left:927.5px;top:278px;">Dial Out</div>
<div style="left:975px;top:276px;width:39px;height:19px;background:#d9d9d9;border-right:1px solid #c4c4c4"></div>
<div class="t" style="left:794.5px;top:280px;width:400px;text-align:center;">Status</div>
<div style="left:1015px;top:276px;width:41px;height:19px;background:#d9d9d9;border-right:1px solid #c4c4c4"></div>
<div class="t" style="left:835.5px;top:280px;width:400px;text-align:center;">Traffic</div>
<div style="left:1214px;top:276px;width:81px;height:23px;background:#f0f0f0;border:1px solid #000"></div>
<div style="left:1215px;top:277px;width:79px;height:21px;border:1px solid #fff;border-right:0;border-bottom:0"></div>
<div class="t" style="left:1054.5px;top:282px;width:400px;text-align:center;">OK</div>
<div style="left:1214px;top:302px;width:81px;height:23px;background:#f0f0f0;border:1px solid #707070"></div>
<div style="left:1215px;top:303px;width:79px;height:21px;border:1px solid #fff;border-right:0;border-bottom:0"></div>
<div class="t" style="left:1054.5px;top:308px;width:400px;text-align:center;">Cancel</div>
<div style="left:1214px;top:328px;width:81px;height:23px;background:#f0f0f0;border:1px solid #707070"></div>
<div style="left:1215px;top:329px;width:79px;height:21px;border:1px solid #fff;border-right:0;border-bottom:0"></div>
<div class="t" style="left:1054.5px;top:334px;width:400px;text-align:center;">Apply</div>
<div style="left:1214px;top:360px;width:81px;height:23px;background:#f0f0f0;border:1px solid #707070"></div>
<div style="left:1215px;top:361px;width:79px;height:21px;border:1px solid #fff;border-right:0;border-bottom:0"></div>
<div class="t" style="left:1054.5px;top:366px;width:400px;text-align:center;">Disable</div>
<div style="left:1214px;top:386px;width:81px;height:23px;background:#f0f0f0;border:1px solid #707070"></div>
<div style="left:1215px;top:387px;width:79px;height:21px;border:1px solid #fff;border-right:0;border-bottom:0"></div>
<div class="t" style="left:1054.5px;top:392px;width:400px;text-align:center;">Comment</div>
<div style="left:1214px;top:412px;width:81px;height:23px;background:#f0f0f0;border:1px solid #707070"></div>
<div style="left:1215px;top:413px;width:79px;height:21px;border:1px solid #fff;border-right:0;border-bottom:0"></div>
<div class="t" style="left:1054.5px;top:418px;width:400px;text-align:center;">Copy</div>
<div style="left:1214px;top:438px;width:81px;height:23px;background:#f0f0f0;border:1px solid #707070"></div>
<div style="left:1215px;top:439px;width:79px;height:21px;border:1px solid #fff;border-right:0;border-bottom:0"></div>
<div class="t" style="left:1054.5px;top:444px;width:400px;text-align:center;">Remove</div>
<div style="left:1214px;top:464px;width:81px;height:23px;background:#f0f0f0;border:1px solid #707070"></div>
<div style="left:1215px;top:465px;width:79px;height:21px;border:1px solid #fff;border-right:0;border-bottom:0"></div>
<div class="t" style="left:1054.5px;top:470px;width:400px;text-align:center;">Torch</div>
<div style="left:1214px;top:490px;width:81px;height:23px;background:#f0f0f0;border:1px solid #707070"></div>
<div style="left:1215px;top:491px;width:79px;height:21px;border:1px solid #fff;border-right:0;border-bottom:0"></div>
<div class="t" style="left:1054.5px;top:496px;width:400px;text-align:center;">PPPoE Scan</div>
<div style="left:871px;top:723px;width:99px;height:19px;border-left:1px solid #a0a0a0;border-top:1px solid #a0a0a0;background:#efefef"></div>
<div class="t" style="left:873.5px;top:727px;color:#000">enabled</div>
<div style="left:973px;top:723px;width:99px;height:19px;border-left:1px solid #a0a0a0;border-top:1px solid #a0a0a0;background:#efefef"></div>
<div class="t" style="left:975.5px;top:727px;color:#000">running</div>
<div style="left:1075px;top:723px;width:99px;height:19px;border-left:1px solid #a0a0a0;border-top:1px solid #a0a0a0;background:#efefef"></div>
<div class="t" style="left:1077.5px;top:727px;color:#a8a8a8">slave</div>
<div style="left:1177px;top:723px;width:121px;height:19px;border-left:1px solid #a0a0a0;border-top:1px solid #a0a0a0;background:#efefef"></div>
<div class="t" style="left:1179.5px;top:727px;color:#000">Status: connected</div>
<div class="t" style="left:593px;top:308px;width:400px;text-align:right;">Service:</div>
<div style="left:1000px;top:304px;width:177px;height:18px;background:#f0f0f0;border:1px solid #a5a5a5"></div>
<div style="left:1003px;top:306px;width:173px;height:14px;border:1px dotted #000"></div>
<svg style="position:absolute;left:1180.5px;top:309px" width="12" height="8" viewBox="1180.5 309 12 8"><path d="M1181.7 310H1191.3L1186.5 315Z" fill="#000"/></svg>
<div class="t" style="left:593px;top:334px;width:400px;text-align:right;">AC Name:</div>
<div style="left:1000px;top:330px;width:177px;height:18px;background:#f0f0f0;border:1px solid #a5a5a5"></div>
<svg style="position:absolute;left:1180.5px;top:335px" width="12" height="8" viewBox="1180.5 335 12 8"><path d="M1181.7 336H1191.3L1186.5 341Z" fill="#000"/></svg>
<div style="left:880px;top:357px;width:314px;height:1px;background:#d8d8d8"></div>
<div style="left:880px;top:358px;width:314px;height:1px;background:#fff"></div>
<div class="t" style="left:593px;top:369px;width:400px;text-align:right;">User:</div>
<div style="left:1000px;top:365px;width:195px;height:18px;background:#fff;border:1px solid #a5a5a5"></div>
<div class="t" style="left:1003px;top:369px;">365internet</div>
<div class="t" style="left:593px;top:395px;width:400px;text-align:right;">Password:</div>
<div style="left:1000px;top:391px;width:177px;height:18px;background:#fff;border:1px solid #a5a5a5"></div>
<div class="t" style="left:1003px;top:395px;">***********</div>
<svg style="position:absolute;left:1180.5px;top:396px" width="12" height="8" viewBox="1180.5 396 12 8"><path d="M1181.7 402H1191.3L1186.5 397Z" fill="#000"/></svg>
<div class="t" style="left:593px;top:420px;width:400px;text-align:right;">Profile:</div>
<div style="left:1000px;top:416px;width:176px;height:18px;background:#fff;border:1px solid #a5a5a5"></div>
<div class="t" style="left:1003px;top:420px;">default</div>
<div style="left:1177px;top:416px;width:18px;height:18px;background:#f0f0f0;border:1px solid #a0a0a0"></div>
<div style="left:1178px;top:417px;width:16px;height:16px;border-top:1px solid #fff;border-left:1px solid #fff"></div>
<svg style="position:absolute;left:1177px;top:416px" width="18" height="18" viewBox="1177 416 18 18"><path d="M1182 421H1189V422.2H1182Z M1184 423H1187V425H1189L1185.5 429L1182 425H1184Z" fill="#000"/></svg>
<div class="t" style="left:593px;top:446px;width:400px;text-align:right;">Keepalive Timeout:</div>
<div style="left:1000px;top:442px;width:177px;height:18px;background:#fff;border:1px solid #a5a5a5"></div>
<div class="t" style="left:1003px;top:446px;">60</div>
<svg style="position:absolute;left:1180.5px;top:447px" width="12" height="8" viewBox="1180.5 447 12 8"><path d="M1181.7 453H1191.3L1186.5 448Z" fill="#000"/></svg>
<div style="left:880px;top:469px;width:314px;height:1px;background:#d8d8d8"></div>
<div style="left:880px;top:470px;width:314px;height:1px;background:#fff"></div>
<div style="left:1000px;top:477px;width:12px;height:12px;background:#fff;border:1px solid #a0a0a0"></div>
<div class="t" style="left:1016px;top:478px;">Dial On Demand</div>
<div style="left:1000px;top:497px;width:12px;height:12px;background:#fff;border:1px solid #a0a0a0"></div>
<svg style="position:absolute;left:1000px;top:497px" width="12" height="12" viewBox="1000 497 12 12"><path d="M1002.8 502.4L1005.4 505.4L1009.6 500.2" stroke="#000" stroke-width="2.4" fill="none"/></svg>
<div class="t" style="left:1016px;top:498px;">Use Peer DNS</div>
<div style="left:1000px;top:517px;width:12px;height:12px;background:#fff;border:1px solid #a0a0a0"></div>
<svg style="position:absolute;left:1000px;top:517px" width="12" height="12" viewBox="1000 517 12 12"><path d="M1002.8 522.4L1005.4 525.4L1009.6 520.2" stroke="#000" stroke-width="2.4" fill="none"/></svg>
<div class="t" style="left:1016px;top:518px;">Add Default Route</div>
<div class="t" style="left:593px;top:541px;width:400px;text-align:right;color:#d01818">Default Route Distance:</div>
<div style="left:1000px;top:537px;width:195px;height:18px;background:#fff;border:1px solid #a5a5a5"></div>
<div class="t" style="left:1003px;top:541px;">0</div>
<div style="left:880px;top:564px;width:314px;height:1px;background:#d8d8d8"></div>
<div style="left:880px;top:565px;width:314px;height:1px;background:#fff"></div>
<div class="t" style="left:593px;top:576px;width:400px;text-align:right;">Allow:</div>
<div style="left:1000px;top:575px;width:12px;height:12px;background:#fff;border:1px solid #a0a0a0"></div>
<svg style="position:absolute;left:1000px;top:575px" width="12" height="12" viewBox="1000 575 12 12"><path d="M1002.8 580.4L1005.4 583.4L1009.6 578.2" stroke="#000" stroke-width="2.4" fill="none"/></svg>
<div class="t" style="left:1015px;top:576px;">mschap2</div>
<div style="left:1069px;top:575px;width:12px;height:12px;background:#fff;border:1px solid #a0a0a0"></div>
<svg style="position:absolute;left:1069px;top:575px" width="12" height="12" viewBox="1069 575 12 12"><path d="M1071.8 580.4L1074.4 583.4L1078.6 578.2" stroke="#000" stroke-width="2.4" fill="none"/></svg>
<div class="t" style="left:1084px;top:576px;">mschap1</div>
<div style="left:1000px;top:592px;width:12px;height:12px;background:#fff;border:1px solid #a0a0a0"></div>
<svg style="position:absolute;left:1000px;top:592px" width="12" height="12" viewBox="1000 592 12 12"><path d="M1002.8 597.4L1005.4 600.4L1009.6 595.2" stroke="#000" stroke-width="2.4" fill="none"/></svg>
<div class="t" style="left:1015px;top:593px;">chap</div>
<div style="left:1069px;top:592px;width:12px;height:12px;background:#fff;border:1px solid #a0a0a0"></div>
<svg style="position:absolute;left:1069px;top:592px" width="12" height="12" viewBox="1069 592 12 12"><path d="M1071.8 597.4L1074.4 600.4L1078.6 595.2" stroke="#000" stroke-width="2.4" fill="none"/></svg>
<div class="t" style="left:1084px;top:593px;">pap</div>
</body></html>
